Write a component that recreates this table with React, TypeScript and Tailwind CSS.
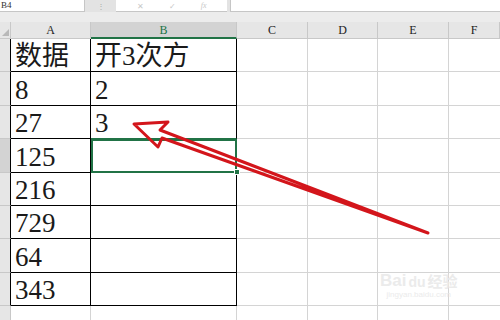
import React from "react";

const COLS = [
  { key: "A", w: "w-[80px]" },
  { key: "B", w: "w-[146px]" },
  { key: "C", w: "w-[71px]" },
  { key: "D", w: "w-[70px]" },
  { key: "E", w: "w-[71px]" },
  { key: "F", w: "flex-1" },
];

const ROWS: [string, string][] = [
  ["数据", "开3次方"],
  ["8", "2"],
  ["27", "3"],
  ["125", ""],
  ["216", ""],
  ["729", ""],
  ["64", ""],
  ["343", ""],
  ["", ""],
];

const serif = "font-['Liberation_Serif','Times_New_Roman','DejaVu_Serif','Noto_Sans_CJK_SC',serif]";

function Arrow() {
  return (
    <svg className="pointer-events-none absolute left-0 top-0" width="500" height="320" viewBox="0 0 500 320">
      <polygon
        points="134,124 168,122 160,130 428,233 162,138 158,147"
        fill="none"
        stroke="#d3151b"
        strokeWidth="3"
        strokeLinejoin="round"
      />
    </svg>
  );
}

function Watermark() {
  return (
    <div className="pointer-events-none absolute left-[380px] top-[272px] flex flex-col items-center text-[#ebebeb]">
      <div className="flex items-end gap-[2px] font-['Liberation_Sans','Noto_Sans_CJK_SC',sans-serif] text-[17px] font-bold leading-none">
        <span>Bai</span>
        <span className="text-[14px]">du</span>
        <span className="text-[15px]">经验</span>
      </div>
      <span className="mt-[2px] font-['Liberation_Sans',sans-serif] text-[8px] leading-none">jingyan.baidu.com</span>
    </div>
  );
}

export default function App() {
  return (
    <div className="relative h-[320px] w-[500px] overflow-hidden bg-white">
      {/* formula bar */}
      <div className="flex h-[12px] bg-[#e3e3e3]">
        <div className={`w-[85px] border-b border-r border-[#c6c6c6] bg-white pl-[1px] text-[9px] leading-[10px] text-[#333] ${serif}`}>
          B4
        </div>
        <div className="flex w-[31px] items-center justify-center text-[8px] leading-none text-[#aaa]">⋮</div>
        <div className="flex w-[111px] items-center justify-around border-b border-[#c6c6c6] bg-white px-[8px] text-[8px] leading-none text-[#c8c8c8]">
          <span>✕</span>
          <span>✓</span>
          <span className={`italic ${serif}`}>fx</span>
        </div>
        <div className="ml-[3px] flex-1 border-b border-l border-[#c6c6c6] bg-white" />
      </div>
      <div className="h-[10px] bg-[#ececec]" />

      {/* column headers */}
      <div className="flex h-[17px] bg-[#e6e6e6]">
        <div className="relative w-[11px] border-b border-r border-[#c8c8c8]">
          <div className="absolute bottom-[2px] right-[1px] h-0 w-0 border-b-[7px] border-l-[7px] border-b-[#b8b8b8] border-l-transparent" />
        </div>
        {COLS.map((c) => (
          <div
            key={c.key}
            className={`${c.w} flex items-center justify-center border-r text-[12px] leading-none ${serif} ${
              c.key === "B"
                ? "border-b-2 border-b-[#217346] border-r-[#c8c8c8] bg-[#d3d3d3] text-[#217346]"
                : "border-b border-[#c8c8c8] text-[#222]"
            }`}
          >
            {c.key}
          </div>
        ))}
      </div>

      {/* rows */}
      {ROWS.map((r, i) => {
        const inTable = i < 8;
        const selected = i === 3;
        return (
          <div key={i} className="flex h-[33.4px]">
            <div
              className={`w-[11px] border-b border-r ${
                inTable ? "border-r-black" : "border-r-[#c8c8c8]"
              } border-b-[#c8c8c8] ${selected ? "bg-[#d3d3d3]" : "bg-[#e6e6e6]"}`}
            />
            <div
              className={`flex w-[80px] items-end overflow-hidden border-b border-r pl-[4px] text-[27px] leading-[30px] text-[#1a1a1a] ${serif} ${
                inTable ? "border-black" : "border-[#d4d4d4]"
              }`}
            >
              {r[0]}
            </div>
            <div
              className={`relative flex w-[146px] items-end overflow-hidden pl-[4px] text-[27px] leading-[30px] text-[#1a1a1a] ${serif} ${
                selected
                  ? "border-2 border-[#217346]"
                  : inTable
                  ? "border-b border-r border-black"
                  : "border-b border-r border-[#d4d4d4]"
              } ${i === 2 ? "border-b-[#217346]" : ""}`}
            >
              {r[1]}
            </div>
            <div className="w-[71px] border-b border-r border-[#d4d4d4]" />
            <div className="w-[70px] border-b border-r border-[#d4d4d4]" />
            <div className="w-[71px] border-b border-r border-[#d4d4d4]" />
            <div className="flex-1 border-b border-[#d4d4d4]" />
          </div>
        );
      })}

      {/* fill handle */}
      <div className="absolute left-[234px] top-[169px] h-[6px] w-[6px] border border-white bg-[#217346]" />

      <Watermark />
      <Arrow />
    </div>
  );
}
